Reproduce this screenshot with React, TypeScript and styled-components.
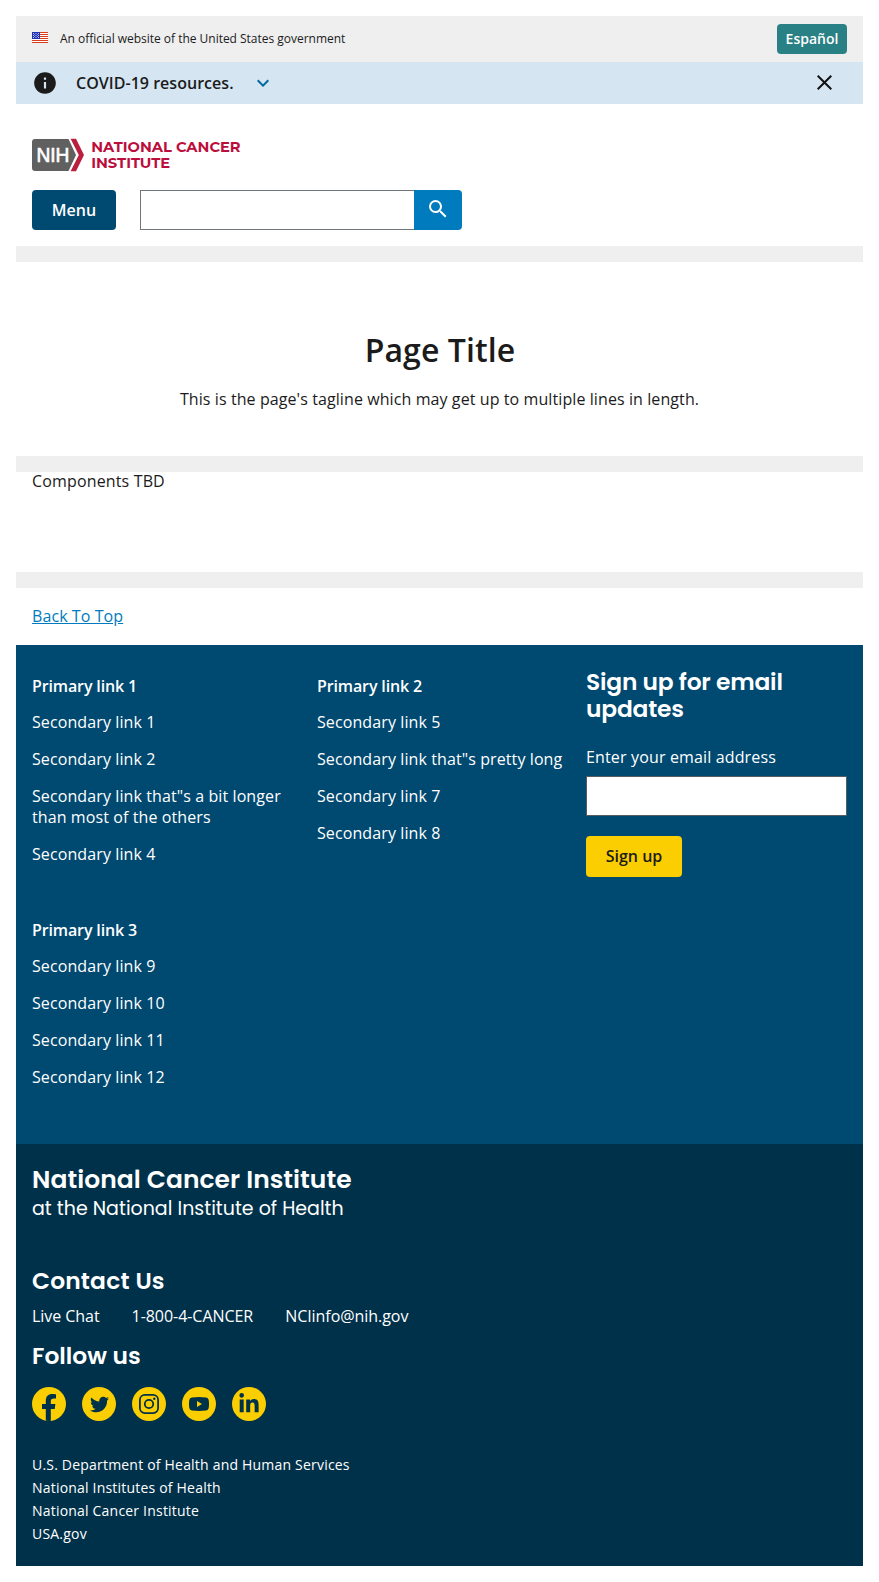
import React from "react";
import styled, { createGlobalStyle } from "styled-components";
import { MdInfo, MdSearch, MdExpandMore } from "react-icons/md";
import { FaTwitter, FaLinkedinIn } from "react-icons/fa";

const GlobalStyle = createGlobalStyle`
  *, *::before, *::after { box-sizing: border-box; }
  body { margin: 0; background: #fff; color: #1b1b1b; font: 400 16px/1.3 "Open Sans", sans-serif; }
  h1, h2, p, ul { margin: 0; padding: 0; }
  ul { list-style: none; }
  a { color: inherit; text-decoration: none; }
  button, input { font-family: inherit; border-radius: 0; }
  svg { display: block; flex: none; }
`;

const Page = styled.div`padding: 16px;`;

const GovBanner = styled.section`
  height: 46px;
  padding: 0 16px;
  display: flex;
  align-items: center;
  background: #efefef;
  font-size: 12px;
`;
const GovText = styled.p`flex: 1; margin-left: 12px; letter-spacing: -0.02px;`;
const FlagBox = styled.span`padding-bottom: 3px;`;

const Button = styled.button<{ $bg: string; $fg?: string; $w: number; $h: number; $size?: number }>`
  width: ${(p) => p.$w}px;
  height: ${(p) => p.$h}px;
  padding: 0 0 1px;
  border: 0;
  border-radius: 4px;
  background: ${(p) => p.$bg};
  color: ${(p) => p.$fg ?? "#fff"};
  font-size: ${(p) => p.$size ?? 16}px;
  font-weight: 600;
  line-height: 1;
`;

const Alert = styled.section`
  height: 42px;
  padding: 0 31px 0 32px;
  display: flex;
  align-items: center;
  background: #d5e6f2;
  font-weight: 600;
  & > :first-child { margin-left: -16px; }
`;
const AlertText = styled.p`margin: 0 17px 0 18px; letter-spacing: 0.03px;`;
const CloseButton = styled.button`
  margin-left: auto;
  padding: 0 0 2px;
  border: 0;
  background: none;
`;

const Header = styled.header`
  height: 142px;
  padding: 34px 16px 16px;
  display: flex;
  flex-direction: column;
  justify-content: space-between;
`;
const Controls = styled.div`display: flex;`;
const SearchForm = styled.form`display: flex; margin-left: 24px;`;
const SearchInput = styled.input`
  width: 274px;
  height: 40px;
  border: 1px solid #71767a;
  border-right: 0;
  background: #fff;
`;
const SearchButton = styled.button`
  width: 48px;
  height: 40px;
  padding: 0 0 3px;
  display: grid;
  place-items: center;
  border: 0;
  border-radius: 0 4px 4px 0;
  background: #007bbd;
  color: #fff;
`;

const Divider = styled.div`height: 16px; background: #efefef;`;

const Hero = styled.section`
  height: 194px;
  padding-top: 67px;
  text-align: center;
`;
const Title = styled.h1`
  padding-left: 1px;
  font-size: 32px;
  font-weight: 600;
  line-height: 42px;
  letter-spacing: 0.1px;
`;
const Tagline = styled.p`margin-top: 18px; line-height: 21px; letter-spacing: 0.09px;`;
const Content = styled.main`height: 100px; padding: 0 16px; line-height: 19px; letter-spacing: 0.15px;`;
const BackToTop = styled.div`
  height: 57px;
  padding: 18px 16px;
  letter-spacing: 0.08px;
  a { color: #007bbd; text-decoration: underline; }
`;

const PrimaryFooter = styled.section`
  height: 499px;
  padding: 0 16px;
  display: flex;
  background: #004971;
  color: #fff;
`;
const LinkGrid = styled.nav`
  width: 554px;
  padding-top: 31px;
  display: grid;
  grid-template-columns: 285px 269px;
  grid-template-rows: 244px auto;
`;
const LinkGroup = styled.div`line-height: 21px;`;
const PrimaryLink = styled.a`display: block; font-weight: 600; letter-spacing: -0.13px;`;
const SecondaryList = styled.ul`
  margin-top: 15px;
  display: grid;
  gap: 16px;
  letter-spacing: 0.1px;
  li { max-width: 269px; }
`;

const SignUp = styled.form`flex: 1; padding-top: 23px;`;
const Heading = styled.h2<{ $size: number; $lh: number; $ls?: number; $weight?: number }>`
  font-family: Poppins, Inter, sans-serif;
  font-size: ${(p) => p.$size}px;
  font-weight: ${(p) => p.$weight ?? 600};
  line-height: ${(p) => p.$lh}px;
  letter-spacing: ${(p) => p.$ls ?? 0}px;
  white-space: pre-line;
`;
const Label = styled.label`display: block; margin: 25px 0 8px; line-height: 21px; letter-spacing: 0.15px;`;
const EmailInput = styled.input`
  display: block;
  width: 261px;
  height: 40px;
  margin-bottom: 20px;
  border: 1px solid #565c65;
  background: #fff;
`;

const SecondaryFooter = styled.section`
  height: 422px;
  padding: 20px 16px 0;
  background: #00314a;
  color: #fff;
`;
const ContactSection = styled.div`margin-top: 44px;`;
const ContactLinks = styled.div`
  display: flex;
  gap: 32px;
  margin: 10px 0 14px;
  line-height: 21px;
  letter-spacing: -0.05px;
`;
const SocialLinks = styled.div`display: flex; gap: 16px; margin-top: 16px;`;
const SocialCircle = styled.a`
  width: 34px;
  height: 34px;
  display: grid;
  place-items: center;
  overflow: hidden;
  border-radius: 50%;
  background: #face00;
  color: #00314a;
`;
const Agencies = styled.ul`
  margin-top: 32px;
  font-size: 14px;
  line-height: 23px;
  letter-spacing: 0.2px;
`;

const Flag = () => (
  <svg width="16" height="11" viewBox="0 0 16 11" shapeRendering="crispEdges">
    <rect width="16" height="11" fill="#fff" />
    {[0, 2, 4, 6, 8, 10].map((y) => (
      <rect key={y} y={y} width="16" height="1" fill="#db3e1f" />
    ))}
    <rect width="8" height="7" fill="#1e33b1" />
    <g fill="#fff" shapeRendering="auto">
      {[1.5, 3.5, 5.5].map((y) =>
        [1.5, 4, 6.5].map((x) => <circle key={`${x}-${y}`} cx={x} cy={y} r=".5" />)
      )}
      {[2.5, 4.5].map((y) => [2.7, 5.2].map((x) => <circle key={`${x}-${y}`} cx={x} cy={y} r=".45" />))}
    </g>
  </svg>
);

const Logo = () => (
  <svg width="210" height="34" viewBox="0 0 210 34">
    <path d="M3 1H36.5L44 17L36.5 33H3a3 3 0 0 1-3-3V4a3 3 0 0 1 3-3z" fill="#606060" />
    <path d="M38.6.8H44L52 17L44 33.2H38.6L46.8 17z" fill="#bb1f40" />
    <text x="4.4" y="24" fill="#fff" fontFamily="Liberation Sans, sans-serif" fontSize="20" stroke="#fff" strokeWidth=".7" textLength="33" lengthAdjust="spacingAndGlyphs">NIH</text>
    <g fill="#bb0e3d" fontFamily="Montserrat, Inter, sans-serif" fontWeight="700" fontSize="14.8">
      <text x="59.2" y="14.3" textLength="149.4" lengthAdjust="spacingAndGlyphs">NATIONAL CANCER</text>
      <text x="59.2" y="29.5" textLength="79" lengthAdjust="spacingAndGlyphs">INSTITUTE</text>
    </g>
  </svg>
);

const FacebookGlyph = () => (
  <svg width="34" height="34" viewBox="0 0 34 34" fill="currentColor">
    <path d="M13.8 34V21.9H10V17h3.8v-3.6c0-4.3 2.6-6.5 6.3-6.5 1.9 0 3.9.3 3.9.3v4.2h-2.2c-2.1 0-3 1.2-3 2.6V17h4.6l-.7 4.9h-3.9V34z" />
  </svg>
);
const InstagramGlyph = () => (
  <svg width="20" height="20" viewBox="0 0 20 20" fill="none" stroke="currentColor" strokeWidth="1.8">
    <rect x=".9" y=".9" width="18.2" height="18.2" rx="5" />
    <circle cx="10" cy="10" r="4.2" />
    <circle cx="15.3" cy="4.7" r="1.2" fill="currentColor" stroke="none" />
  </svg>
);
const YoutubeGlyph = () => (
  <svg width="20" height="14" viewBox="0 0 20 14">
    <path fill="currentColor" d="M3 .4Q10-.4 17 .4Q19.4.7 19.7 3Q20.3 7 19.7 11Q19.4 13.3 17 13.6Q10 14.4 3 13.6Q.6 13.3.3 11Q-.3 7 .3 3Q.6.7 3 .4z" />
    <path fill="#face00" d="M8 4l5 3-5 3z" />
  </svg>
);

const groups = [
  { title: "Primary link 1", links: ["Secondary link 1", "Secondary link 2", 'Secondary link that"s a bit longer than most of the others', "Secondary link 4"] },
  { title: "Primary link 2", links: ["Secondary link 5", 'Secondary link that"s pretty long', "Secondary link 7", "Secondary link 8"] },
  { title: "Primary link 3", links: ["Secondary link 9", "Secondary link 10", "Secondary link 11", "Secondary link 12"] },
];
const social = [
  { name: "Facebook", icon: <FacebookGlyph /> },
  { name: "Twitter", icon: <FaTwitter size={19} /> },
  { name: "Instagram", icon: <InstagramGlyph /> },
  { name: "YouTube", icon: <YoutubeGlyph /> },
  { name: "LinkedIn", icon: <FaLinkedinIn size={22} /> },
];
const agencies = ["U.S. Department of Health and Human Services", "National Institutes of Health", "National Cancer Institute", "USA.gov"];

export default function App() {
  return (
    <Page>
      <GlobalStyle />
      <GovBanner>
        <FlagBox><Flag /></FlagBox>
        <GovText>An official website of the United States government</GovText>
        <Button $bg="#298085" $w={70} $h={30} $size={14}>Español</Button>
      </GovBanner>
      <Alert>
        <MdInfo size={26} />
        <AlertText>COVID-19 resources.</AlertText>
        <MdExpandMore size={24} color="#00699f" />
        <CloseButton aria-label="Close">
          <svg width="15" height="15" viewBox="0 0 15 15" stroke="#111" strokeWidth="2">
            <path d="M.7.7l13.6 13.6M14.3.7L.7 14.3" />
          </svg>
        </CloseButton>
      </Alert>
      <Header>
        <Logo />
        <Controls>
          <Button $bg="#004971" $w={84} $h={40}>Menu</Button>
          <SearchForm>
            <SearchInput aria-label="Search" />
            <SearchButton type="button" aria-label="Search"><MdSearch size={24} /></SearchButton>
          </SearchForm>
        </Controls>
      </Header>
      <Divider />
      <Hero>
        <Title>Page Title</Title>
        <Tagline>This is the page's tagline which may get up to multiple lines in length.</Tagline>
      </Hero>
      <Divider />
      <Content>Components TBD</Content>
      <Divider />
      <BackToTop><a href="#">Back To Top</a></BackToTop>
      <footer>
        <PrimaryFooter>
          <LinkGrid>
            {groups.map((g) => (
              <LinkGroup key={g.title}>
                <PrimaryLink href="#">{g.title}</PrimaryLink>
                <SecondaryList>
                  {g.links.map((l) => <li key={l}><a href="#">{l}</a></li>)}
                </SecondaryList>
              </LinkGroup>
            ))}
          </LinkGrid>
          <SignUp>
            <Heading $size={23.36} $lh={27} $ls={-0.2}>{"Sign up for email\nupdates"}</Heading>
            <Label htmlFor="email">Enter your email address</Label>
            <EmailInput id="email" />
            <Button type="button" $bg="#face00" $fg="#1b1b1b" $w={96} $h={41}>Sign up</Button>
          </SignUp>
        </PrimaryFooter>
        <SecondaryFooter>
          <Heading $size={25} $lh={31} $ls={0.04}>National Cancer Institute</Heading>
          <Heading as="p" $size={19} $lh={27} $weight={400}>at the National Institute of Health</Heading>
          <ContactSection>
            <Heading $size={23.36} $lh={30} $ls={0.19}>Contact Us</Heading>
            <ContactLinks>
              <a href="#">Live Chat</a>
              <a href="#">1-800-4-CANCER</a>
              <a href="#">NCIinfo@nih.gov</a>
            </ContactLinks>
            <Heading $size={23.36} $lh={30}>Follow us</Heading>
            <SocialLinks>
              {social.map((s) => <SocialCircle key={s.name} href="#" aria-label={s.name}>{s.icon}</SocialCircle>)}
            </SocialLinks>
          </ContactSection>
          <Agencies>
            {agencies.map((a) => <li key={a}><a href="#">{a}</a></li>)}
          </Agencies>
        </SecondaryFooter>
      </footer>
    </Page>
  );
}
